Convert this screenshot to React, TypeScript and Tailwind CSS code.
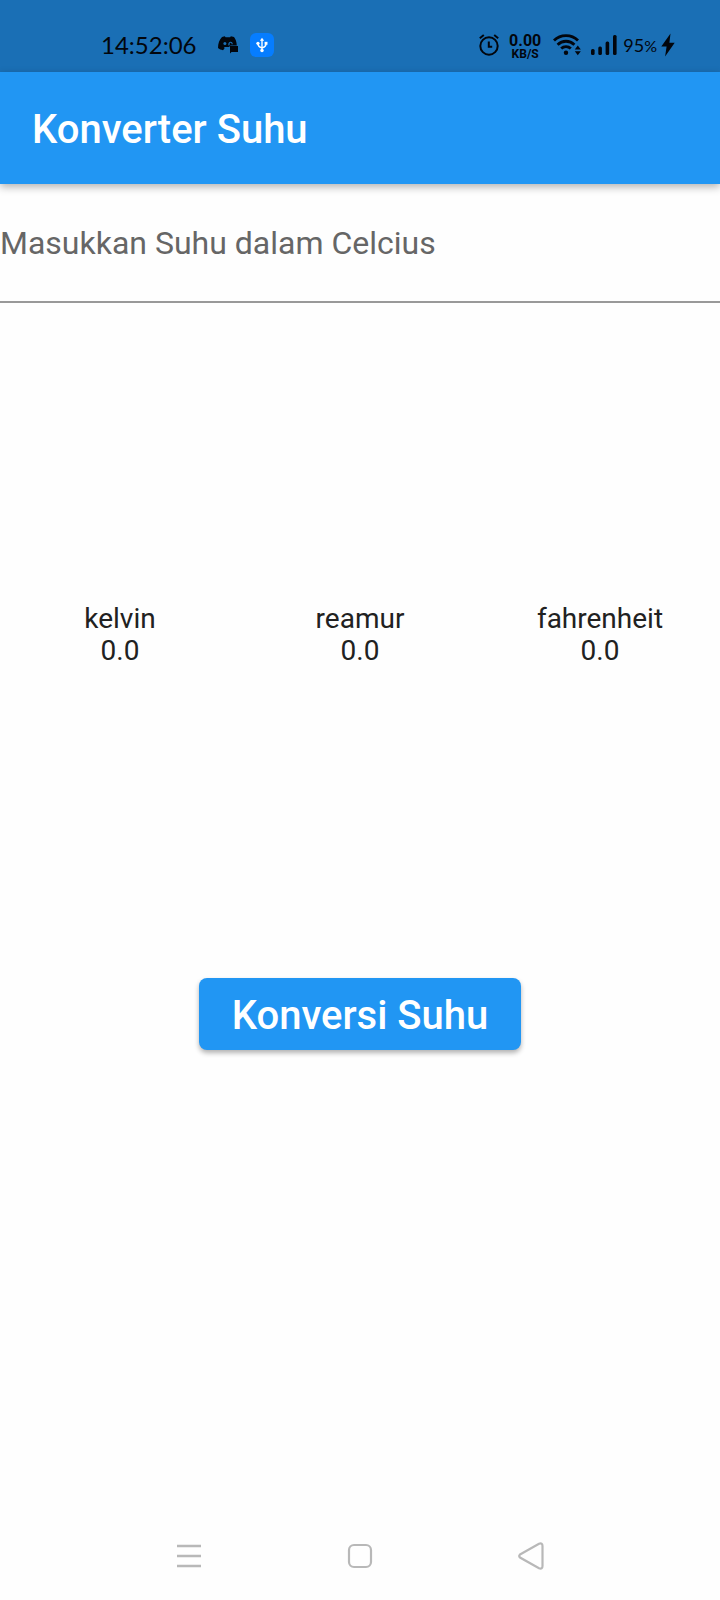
import { useState } from "react";

const clockFont = "font-['Lato','Noto_Sans',sans-serif]";

function DiscordIcon() {
  return (
    <svg width="20" height="18" viewBox="0 0 20 18" aria-hidden="true">
      <path
        d="M4 1 6.800.3l.8 1h4.500l.8-1L16 1c1.600 2.200 2.600 4.600 2.800 8.500H12.500L11 11H7l-1 .5.500 1-1.500 1.700C3 13.800 1.300 13.200 0 12 0 7.500 1.400 3.800 4 1Z"
        fill="#02060d"
      />
      <circle cx="6.900" cy="7.600" r="1.500" fill="#1a6fb5" />
      <path d="M11 9.300c-.6-3.800 3.200-4 3.200-1" fill="none" stroke="#1a6fb5" strokeWidth="1.200" />
      <path d="M12 10h8v6h-6.500L12 17.500Z" fill="#02060d" />
    </svg>
  );
}

function UsbIcon() {
  return (
    <span className="flex size-6 items-center justify-center rounded-md bg-[#067dff]">
      <svg width="12" height="16" viewBox="0 0 14 18" fill="none" stroke="white" strokeWidth="1.600" aria-hidden="true">
        <path d="M7 3v11M7 12.500C4.500 11.500 2.500 11 2.300 8M7 12.500c2.500-1 4.500-1.500 4.700-4.500" />
        <path d="m7 .5 2.500 3.500h-5Z" fill="white" stroke="none" />
        <circle cx="7" cy="15.500" r="2" fill="white" stroke="none" />
        <circle cx="2.300" cy="7" r="1.900" fill="white" stroke="none" />
        <path d="M10 5.300h3.400v3.400H10z" fill="white" stroke="none" />
      </svg>
    </span>
  );
}

function AlarmIcon() {
  return (
    <svg width="20" height="22" viewBox="0 0 20 22" fill="none" stroke="#02060d" strokeWidth="2" aria-hidden="true">
      <circle cx="10" cy="12" r="8.700" />
      <path d="M9.800 7.500v5.200h3.400M.8 4.200 4.800 1M19.200 4.200 15.200 1" />
    </svg>
  );
}

function WifiIcon() {
  return (
    <svg width="28" height="22" viewBox="0 0 28 22" fill="none" stroke="#02060d" aria-hidden="true">
      <path d="M1 6.500c6.500-6.600 17.500-6.600 24 0M4.600 10.700c4.700-4.600 12.100-4.600 16.800 0M8.200 14.500c2.700-2.600 6.900-2.600 9.600 0" strokeWidth="2.800" />
      <circle cx="13" cy="18.700" r="2.200" fill="#02060d" stroke="none" />
      <path d="m21.800 15.500 3-4 3 4ZM21.800 17.300l3 4 3-4Z" fill="#02060d" stroke="none" />
    </svg>
  );
}

function SignalIcon() {
  return (
    <svg width="26" height="22" viewBox="0 0 26 22" fill="#02060d" aria-hidden="true">
      <rect x="0" y="15" width="3.600" height="6" rx="1.500" />
      <rect x="7.300" y="12.500" width="3.600" height="8.500" rx="1.500" />
      <rect x="14.600" y="7.500" width="3.600" height="13.500" rx="1.500" />
      <rect x="22" y="1" width="3.600" height="20" rx="1.500" />
    </svg>
  );
}

function StatusBar() {
  return (
    <div className="flex h-[72px] items-center justify-between bg-[#1a6fb5] pt-[18px] pr-[45px] pl-[101px] text-[#02060d]">
      <div className="flex items-center">
        <span className={`text-2xl ${clockFont}`}>14:52:06</span>
        <span className="ml-[21px] flex items-center gap-3">
          <DiscordIcon />
          <UsbIcon />
        </span>
      </div>
      <div className="flex items-center">
        <AlarmIcon />
        <span className="ml-2.5 flex flex-col items-center pt-1 font-['Roboto',sans-serif] font-bold">
          <span className="text-base leading-[14px]">0.00</span>
          <span className="text-xs leading-3">KB/S</span>
        </span>
        <span className="ml-3 flex items-center gap-2.5">
          <WifiIcon />
          <SignalIcon />
        </span>
        <span className={`ml-1.5 text-lg ${clockFont}`}>
          95<span className="text-base">%</span>
        </span>
        <svg className="ml-1" width="14" height="24" viewBox="0 0 14 24" fill="#02060d" aria-hidden="true">
          <path d="M9.500.5.300 13.500H5.600L4.100 23.500 13.700 9.800H8.400Z" />
        </svg>
      </div>
    </div>
  );
}

function NavigationBar() {
  const button = "flex size-12 items-center justify-center";
  return (
    <nav className="flex h-[88px] items-center justify-around px-[104px]">
      <button type="button" aria-label="Menu" className={button}>
        <svg width="26" height="26" viewBox="0 0 26 26" stroke="#b8b8b8" strokeWidth="2.400" aria-hidden="true">
          <path d="M1 3h24M1 13h24M1 23h24" />
        </svg>
      </button>
      <button type="button" aria-label="Home" className={button}>
        <svg width="26" height="26" viewBox="0 0 26 26" fill="none" stroke="#b8b8b8" strokeWidth="2.200" aria-hidden="true">
          <rect x="2" y="2" width="22" height="22" rx="5" />
        </svg>
      </button>
      <button type="button" aria-label="Back" className={button}>
        <svg width="26" height="28" viewBox="0 0 26 28" fill="none" stroke="#b8b8b8" strokeWidth="2.200" aria-hidden="true">
          <path d="M2 12.500 21 1.800Q24.500.5 24.500 4V24Q24.500 27.500 21 26.200L2 15.500Q.5 14 2 12.500Z" />
        </svg>
      </button>
    </nav>
  );
}

export default function App() {
  const [celsius, setCelsius] = useState("");
  const [result, setResult] = useState({ kelvin: 0, reamur: 0, fahrenheit: 0 });

  const convert = () => {
    const c = Number(celsius) || 0;
    setResult({ kelvin: c + 273.15, reamur: c * 0.8, fahrenheit: c * 1.8 + 32 });
  };

  return (
    <div className="flex min-h-screen flex-col bg-[#fefefe] font-['Roboto',sans-serif] text-[#212121]">
      <StatusBar />
      <header className="flex h-28 items-center bg-[#2196f3] px-8 pt-1 shadow-[0_3px_8px_rgba(0,0,0,0.3)]">
        <h1 className="text-[40px] font-medium text-white">Konverter Suhu</h1>
      </header>
      <main className="flex grow flex-col items-center">
        <input
          type="text"
          inputMode="decimal"
          aria-label="Masukkan Suhu dalam Celcius"
          placeholder="Masukkan Suhu dalam Celcius"
          value={celsius}
          onChange={(e) => setCelsius(e.target.value)}
          className="h-[119px] w-full border-b-2 border-[#999999] bg-transparent text-[32px] outline-none placeholder:text-[#666666]"
        />
        <dl className="mt-[300px] grid w-full grid-cols-3 text-center text-[28px] leading-8">
          {Object.entries(result).map(([unit, value]) => (
            <div key={unit}>
              <dt>{unit}</dt>
              <dd>{value.toFixed(1)}</dd>
            </div>
          ))}
        </dl>
        <button
          type="button"
          onClick={convert}
          className="mt-[311px] flex h-[72px] items-center rounded-lg bg-[#2196f3] px-[33px] pt-1 text-[40px] font-medium text-white shadow-[0_3px_5px_rgba(0,0,0,0.3)]"
        >
          Konversi Suhu
        </button>
      </main>
      <NavigationBar />
    </div>
  );
}
